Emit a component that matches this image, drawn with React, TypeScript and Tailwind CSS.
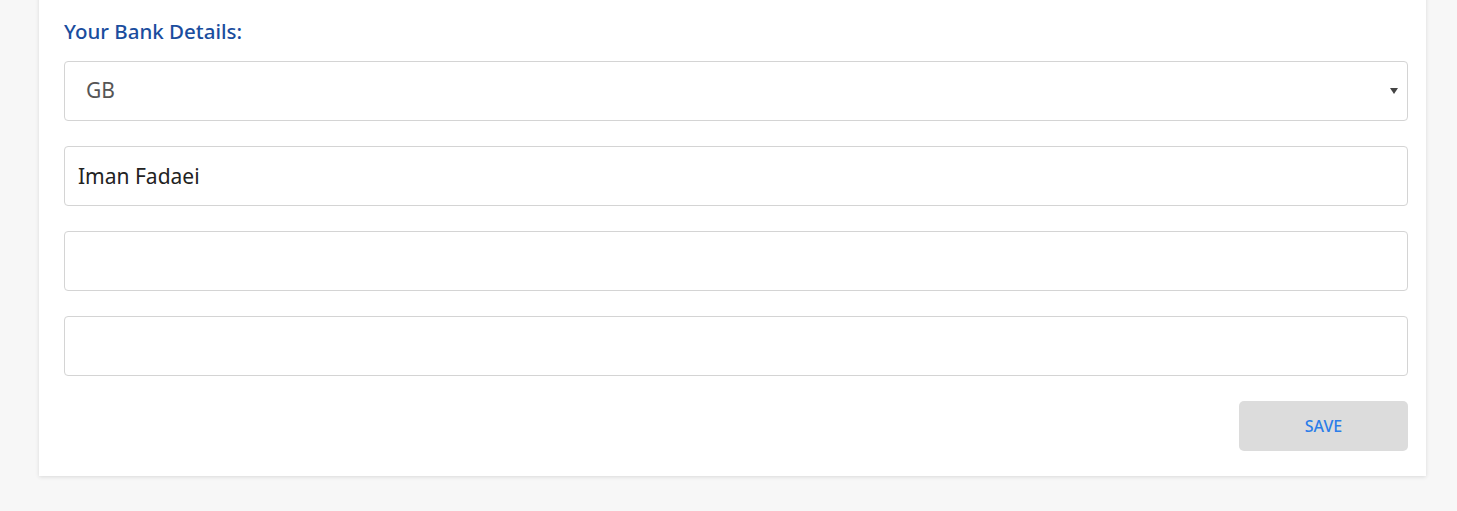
import { useState } from "react";

const fieldClass =
  "w-full h-[60px] rounded-[4px] border border-[#d4d4d4] bg-white px-[13px] text-[21px] text-[#222] outline-none";

export default function App() {
  const [country, setCountry] = useState("GB");
  const [name, setName] = useState("Iman Fadaei");
  const [account, setAccount] = useState("");
  const [sortCode, setSortCode] = useState("");

  return (
    <div className="h-[511px] overflow-hidden bg-[#f7f7f7] font-['Noto_Sans',sans-serif]">
      <div className="ml-[39px] mr-[31px] -mt-[10px] bg-white pl-[25px] pr-[18px] pt-[27px] pb-[25px] shadow-[0_1px_4px_rgba(0,0,0,0.12)]">
        <p className="text-[20.5px] leading-[28px] font-medium text-[#1a4d9e] mb-[16px]">
          Your Bank Details:
        </p>
        <div className="flex flex-col gap-[25px]">
          <div className="relative">
            <select
              value={country}
              onChange={(e) => setCountry(e.target.value)}
              className={fieldClass + " appearance-none pl-[21px] text-[19px] text-[#555]"}
            >
              <option value="GB">GB</option>
              <option value="US">US</option>
              <option value="DE">DE</option>
            </select>
            <span className="pointer-events-none absolute right-[10px] top-[27px] h-0 w-0 border-x-[4px] border-t-[6px] border-x-transparent border-t-[#444]" />
          </div>
          <input value={name} onChange={(e) => setName(e.target.value)} className={fieldClass} />
          <input value={account} onChange={(e) => setAccount(e.target.value)} className={fieldClass} />
          <input value={sortCode} onChange={(e) => setSortCode(e.target.value)} className={fieldClass} />
        </div>
        <div className="flex justify-end mt-[25px]">
          <button className="w-[169px] h-[50px] rounded-[5px] bg-[#dcdcdc] text-[16px] font-medium text-[#2b7de9]">
            SAVE
          </button>
        </div>
      </div>
    </div>
  );
}
